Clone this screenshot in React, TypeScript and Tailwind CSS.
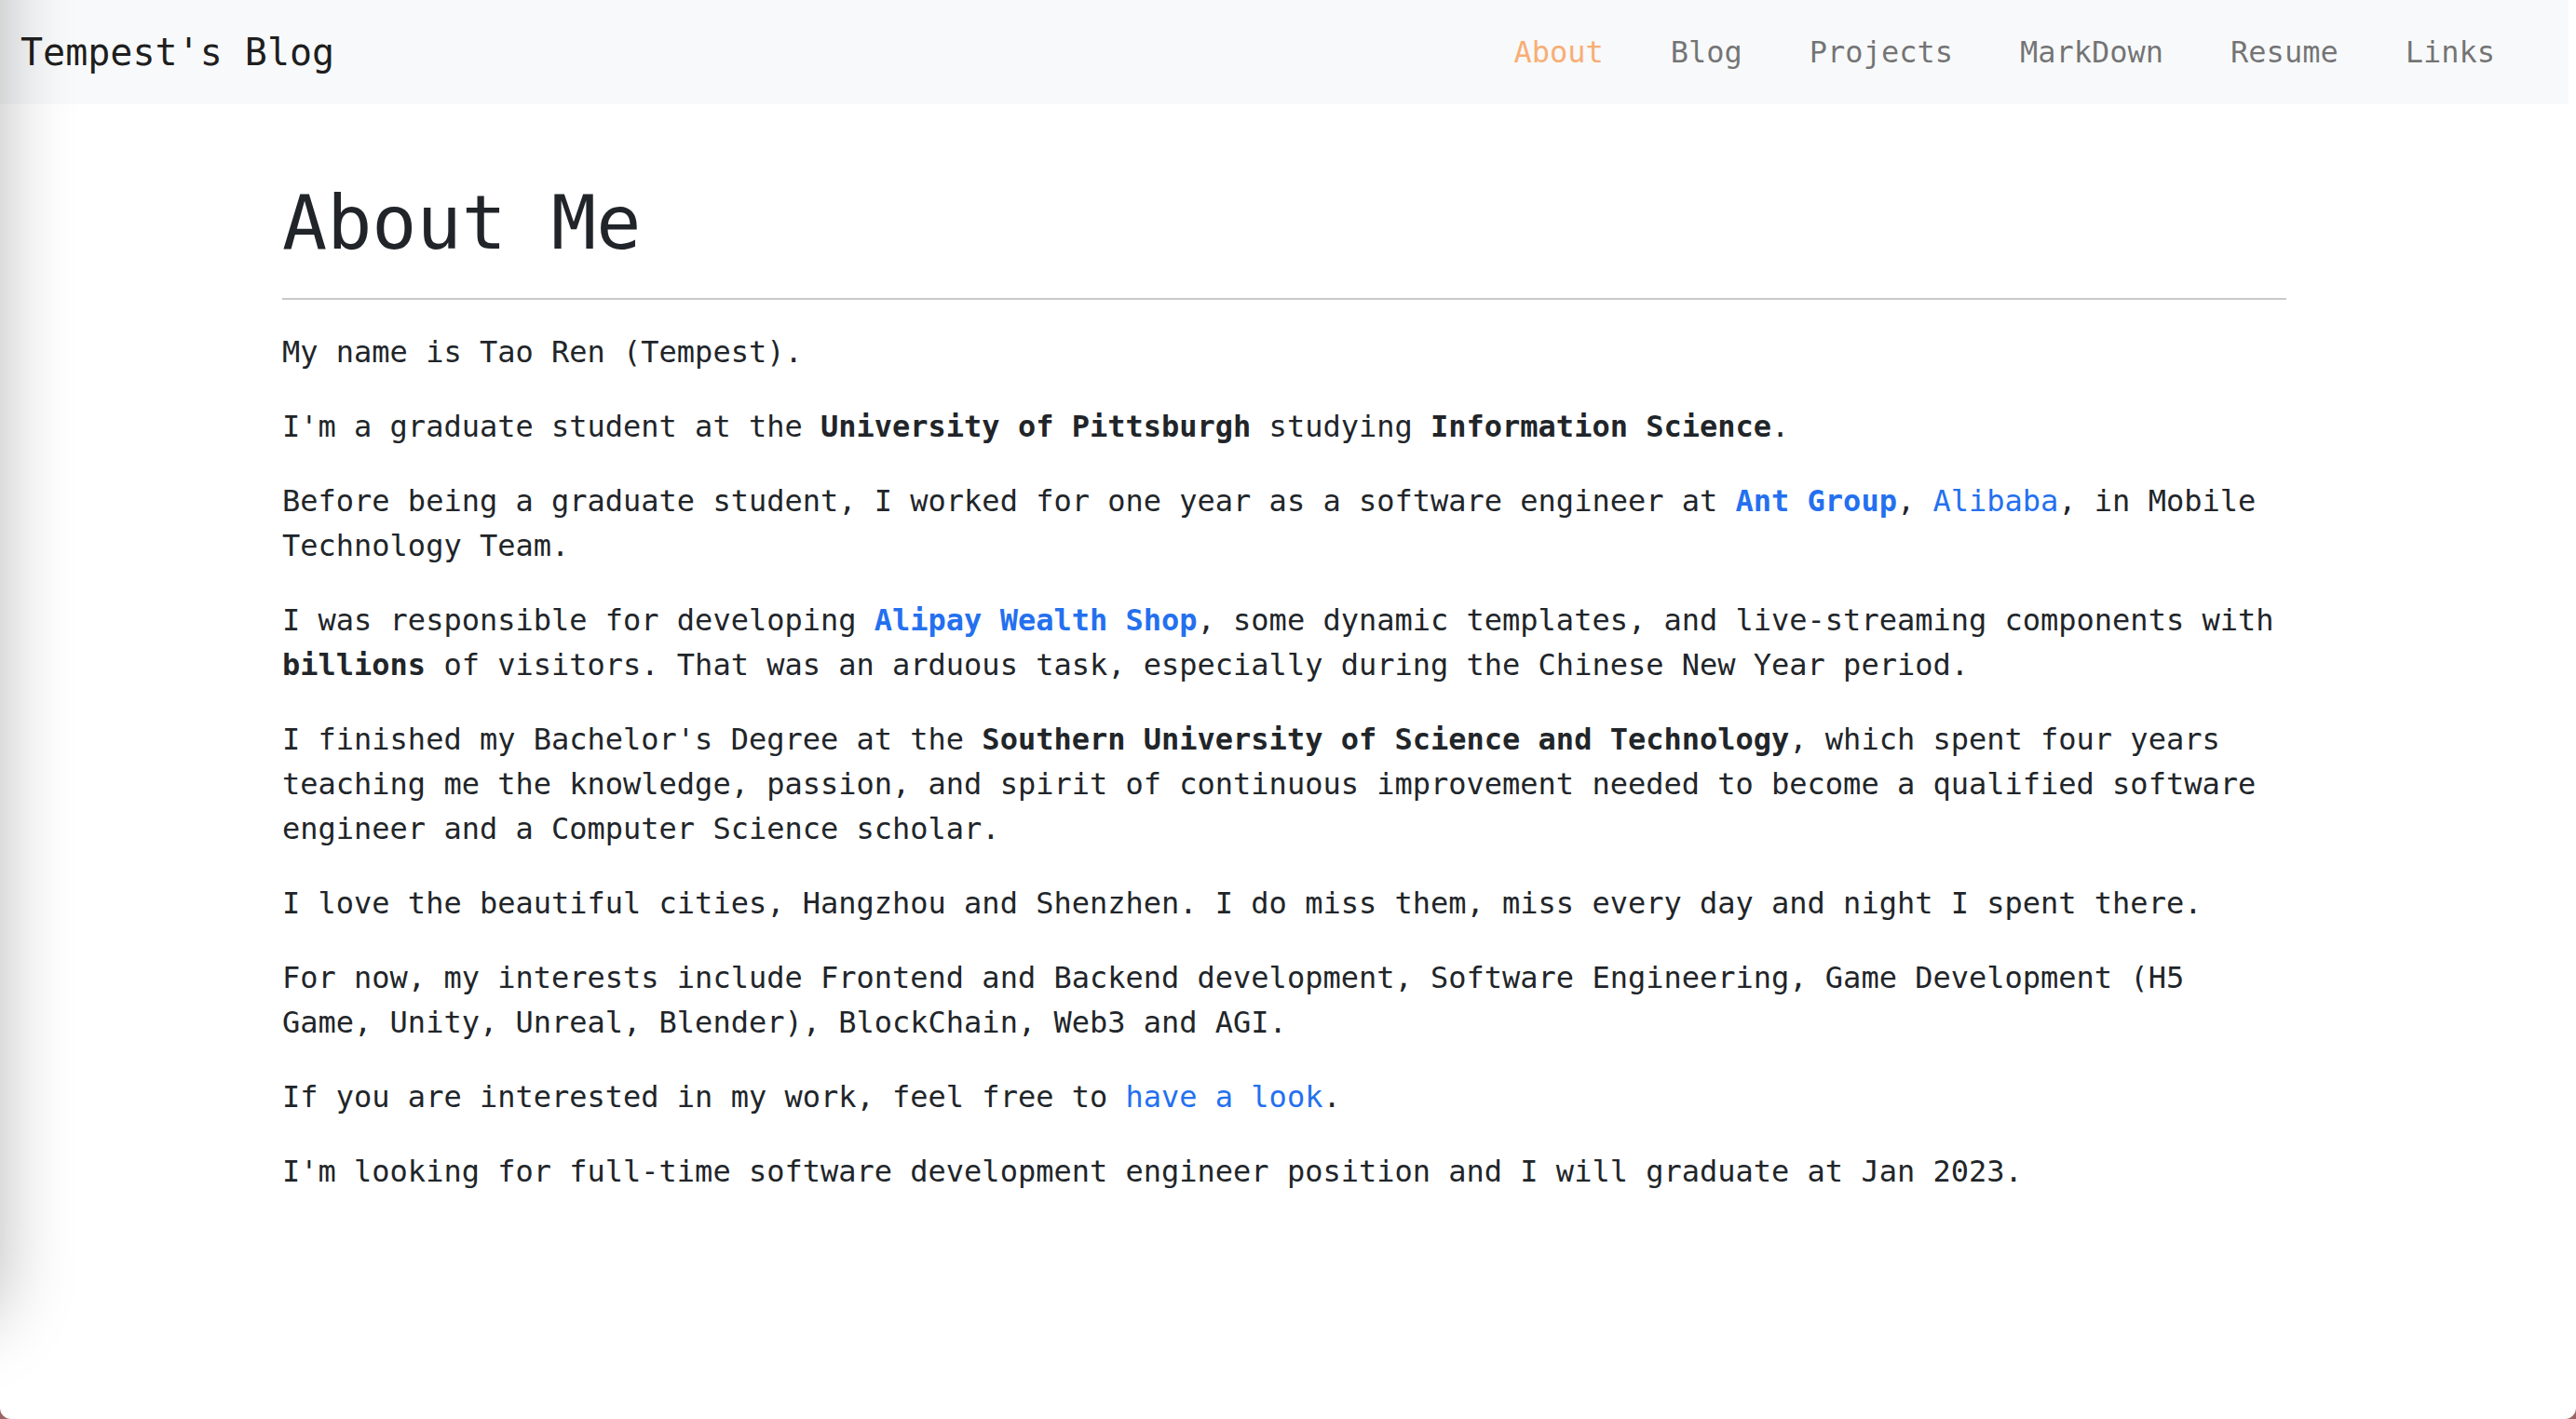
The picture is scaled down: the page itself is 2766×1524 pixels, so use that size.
const navLinks = ["About", "Blog", "Projects", "MarkDown", "Resume", "Links"]

function Link({ children, bold }: { children: React.ReactNode; bold?: boolean }) {
  return (
    <a href="#" className={`text-[#2470ef] no-underline ${bold ? "font-bold" : ""}`}>
      {children}
    </a>
  )
}

export default function App() {
  return (
    <div className="h-screen bg-[#9c6464] font-['DejaVu_Sans_Mono',monospace] text-[#212529]">
      <div className="relative flex h-full overflow-hidden rounded-b-[12px] bg-white">
        <div className="w-[2758px] shrink-0">
          <nav className="flex items-center justify-between bg-[#f8f9fa] py-[16px] pl-[22px] pr-[43px]">
            <a href="#" className="py-[10px] text-[40px] leading-[60px] text-[rgba(0,0,0,0.9)]">
              Tempest's Blog
            </a>
            <ul className="flex">
              {navLinks.map((l) => (
                <li key={l}>
                  <a
                    href="#"
                    className={`block px-[36px] py-[16px] text-[32px] leading-[48px] ${
                      l === "About" ? "text-[#f7ae76]" : "text-[rgba(0,0,0,0.55)]"
                    }`}
                  >
                    {l}
                  </a>
                </li>
              ))}
            </ul>
          </nav>

          <main className="mx-auto w-[2152px] pt-[80px] text-[32px] leading-[48px]">
            <h1 className="text-[80px] leading-[96px] font-normal">About Me</h1>
            <hr className="my-[32px] border-t-2 border-[#c8c9ca]" />

            <p className="mb-[32px]">My name is Tao Ren (Tempest).</p>
            <p className="mb-[32px]">
              I'm a graduate student at the <b>University of Pittsburgh</b> studying <b>Information Science</b>.
            </p>
            <p className="mb-[32px]">
              Before being a graduate student, I worked for one year as a software engineer at{" "}
              <Link bold>Ant Group</Link>, <Link>Alibaba</Link>, in Mobile Technology Team.
            </p>
            <p className="mb-[32px]">
              I was responsible for developing <Link bold>Alipay Wealth Shop</Link>, some dynamic templates, and
              live-streaming components with <b>billions</b> of visitors. That was an arduous task, especially during
              the Chinese New Year period.
            </p>
            <p className="mb-[32px]">
              I finished my Bachelor's Degree at the <b>Southern University of Science and Technology</b>, which spent
              four years teaching me the knowledge, passion, and spirit of continuous improvement needed to become a
              qualified software engineer and a Computer Science scholar.
            </p>
            <p className="mb-[32px]">
              I love the beautiful cities, Hangzhou and Shenzhen. I do miss them, miss every day and night I spent
              there.
            </p>
            <p className="mb-[32px]">
              For now, my interests include Frontend and Backend development, Software Engineering, Game Development
              (H5 Game, Unity, Unreal, Blender), BlockChain, Web3 and AGI.
            </p>
            <p className="mb-[32px]">
              If you are interested in my work, feel free to <Link>have a look</Link>.
            </p>
            <p className="mb-[32px]">
              I'm looking for full-time software development engineer position and I will graduate at Jan 2023.
            </p>
          </main>
        </div>

        {/* shadow from the window sitting left of this one */}
        <div className="pointer-events-none absolute left-[-300px] top-[-100px] h-[1520px] w-[300px] rounded-[40px] bg-white shadow-[0_0_80px_rgba(0,0,0,0.28)]" />
      </div>
    </div>
  )
}
